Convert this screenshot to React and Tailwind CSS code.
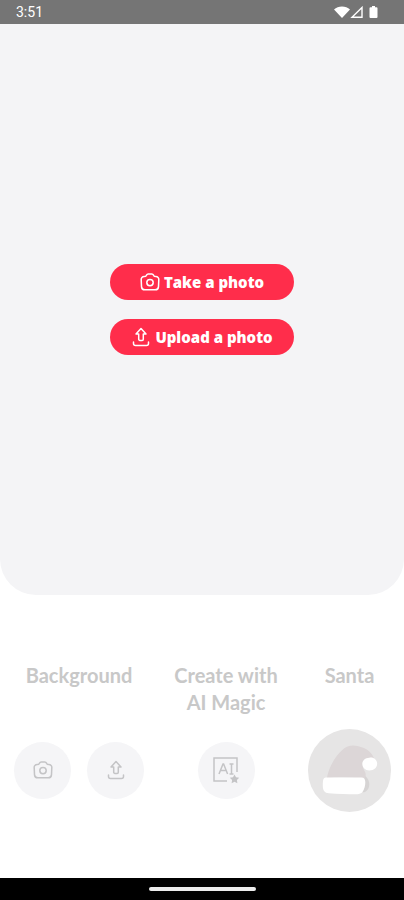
function CameraIcon({ className }) {
  return (
    <svg
      className={className}
      viewBox="0 0 20 20"
      fill="none"
      stroke="currentColor"
      strokeWidth="1.5"
      strokeLinejoin="round"
      aria-hidden="true"
    >
      <path d="M4.2 4.6c1.5 0 1.9-.5 2.3-1.4.4-.8.9-1.2 1.7-1.2h3.6c.8 0 1.300.4 1.700 1.200.4.9.8 1.400 2.300 1.400 2 0 3.100 1.200 3 3l-.3 7c-.1 2-1.200 3.200-3.300 3.200H4.800c-2.100 0-3.200-1.200-3.300-3.200l-.3-7c-.1-1.800 1-3 3-3z" />
      <circle cx="10" cy="10.600" r="3.200" />
    </svg>
  );
}

function UploadIcon({ className }) {
  return (
    <svg
      className={className}
      viewBox="0 0 20 20"
      fill="none"
      stroke="currentColor"
      strokeWidth="1.5"
      strokeLinecap="round"
      strokeLinejoin="round"
      aria-hidden="true"
    >
      <path d="M10 1.500 L15 7 H12.300 V12.200 a1.200 1.200 0 0 1 -1.200 1.200 H8.900 a1.200 1.200 0 0 1 -1.200 -1.200 V7 H5 Z" />
      <path d="M2.500 15v1.500c0 1.300.7 2 2 2h11c1.300 0 2-.7 2-2V15" />
    </svg>
  );
}

function AiIcon({ className }) {
  return (
    <svg
      className={className}
      viewBox="0 0 28 28"
      fill="none"
      stroke="currentColor"
      strokeWidth="1.5"
      aria-hidden="true"
    >
      <path d="M15 25H2V2h23v14" />
      <path d="M7 18l4-10h.6l4 10M8.400 14.500h6" />
      <path d="M17.500 8h4M17.500 18h4M19.500 8v10" />
      <path
        d="M22.500 18.500l1.500 2.800 3.200.5-2.300 2.300.5 3.200-2.900-1.500-2.900 1.500.5-3.200-2.300-2.300 3.200-.5z"
        fill="currentColor"
        stroke="none"
      />
    </svg>
  );
}

function SantaHat() {
  return (
    <svg className="size-[83px]" viewBox="0 0 84 84" aria-hidden="true">
      <path d="M55 46c5 2 7 6 7 10s-2 7-5 8h-6V48z" fill="#d6d4d4" />
      <path
        d="M19 50c2-11 8-22 16-29 6-6 14-5 21-2 5 2 9 6 11 11l-11 3c-2 4 0 7 2 11 1 3 0 5-1 7-12-2-25-3-38-1z"
        fill="#dcd6d7"
      />
      <path
        d="M18 49h36c3 0 4 2 4 5 0 4-1 7-3 10-1 1-3 2-5 2-10 0-20 0-29-1-4 0-6-3-6-7 0-5 0-9 3-9z"
        fill="#ffffff"
      />
      <path
        d="M55 35c0-3 3-6 7-6 4-1 8 2 8 6 0 4-3 7-8 7-4 0-7-3-7-7z"
        fill="#ffffff"
      />
    </svg>
  );
}

function StatusBar() {
  return (
    <header className="flex h-6 items-center justify-between bg-[#757575] pl-4 pr-6 text-white">
      <span className="font-[Roboto,sans-serif] text-sm">3:51</span>
      <svg className="h-3 w-[46px]" viewBox="0 0 46 12" aria-hidden="true">
        <path d="M0 3.500C4-.5 12-.5 16 3.500L8 12z" fill="#fff" />
        <path
          d="M28 1.500V11.300H18z"
          fill="none"
          stroke="#fff"
          strokeWidth="1.400"
        />
        <path
          d="M38 0h3v1.300h1.500a1 1 0 0 1 1 1V11a1 1 0 0 1-1 1h-6a1 1 0 0 1-1-1V2.300a1 1 0 0 1 1-1H38z"
          fill="#fff"
        />
      </svg>
    </header>
  );
}

function PhotoButton({ icon, children }) {
  return (
    <button
      type="button"
      className="flex h-9 w-[184px] items-center justify-center gap-1 rounded-full bg-[#ff2d4b] font-['Open_Sans',sans-serif] text-[15px] font-extrabold text-white"
    >
      {icon}
      {children}
    </button>
  );
}

function RoundButton({ label, children }) {
  return (
    <button
      type="button"
      aria-label={label}
      className="flex size-[57px] items-center justify-center rounded-full bg-[#f5f5f7] text-[#c4c4c6]"
    >
      {children}
    </button>
  );
}

function ToolGroup({ title, children }) {
  return (
    <div className="flex flex-col items-center gap-3">
      <h2 className="h-[54px] whitespace-pre-line text-center text-xl font-bold leading-[27px]">
        {title}
      </h2>
      <div className="flex h-[84px] items-center gap-4">{children}</div>
    </div>
  );
}

export default function App() {
  return (
    <div className="flex min-h-screen flex-col bg-white">
      <StatusBar />
      <main className="flex flex-1 flex-col">
        <section className="flex flex-1 flex-col items-center justify-center gap-[19px] rounded-b-[36px] bg-[#f4f4f6]">
          <PhotoButton icon={<CameraIcon className="size-5" />}>
            Take a photo
          </PhotoButton>
          <PhotoButton icon={<UploadIcon className="size-5" />}>
            Upload a photo
          </PhotoButton>
        </section>
        <section className="flex justify-between px-[13px] pb-[66px] pt-[67px] pl-[14px] font-[Lato,sans-serif] text-[#c8c8c8]">
          <ToolGroup title="Background">
            <RoundButton label="Take a background photo">
              <CameraIcon className="size-5" />
            </RoundButton>
            <RoundButton label="Upload a background">
              <UploadIcon className="size-5" />
            </RoundButton>
          </ToolGroup>
          <ToolGroup title={"Create with\nAI Magic"}>
            <RoundButton label="Create with AI">
              <AiIcon className="size-7" />
            </RoundButton>
          </ToolGroup>
          <ToolGroup title="Santa">
            <button
              type="button"
              aria-label="Santa hat"
              className="size-[83px] rounded-full bg-[#e6e5e5]"
            >
              <SantaHat />
            </button>
          </ToolGroup>
        </section>
      </main>
      <footer className="flex h-[22px] items-center justify-center bg-black">
        <div className="h-1 w-[107px] rounded-full bg-[#ececec]" />
      </footer>
    </div>
  );
}
